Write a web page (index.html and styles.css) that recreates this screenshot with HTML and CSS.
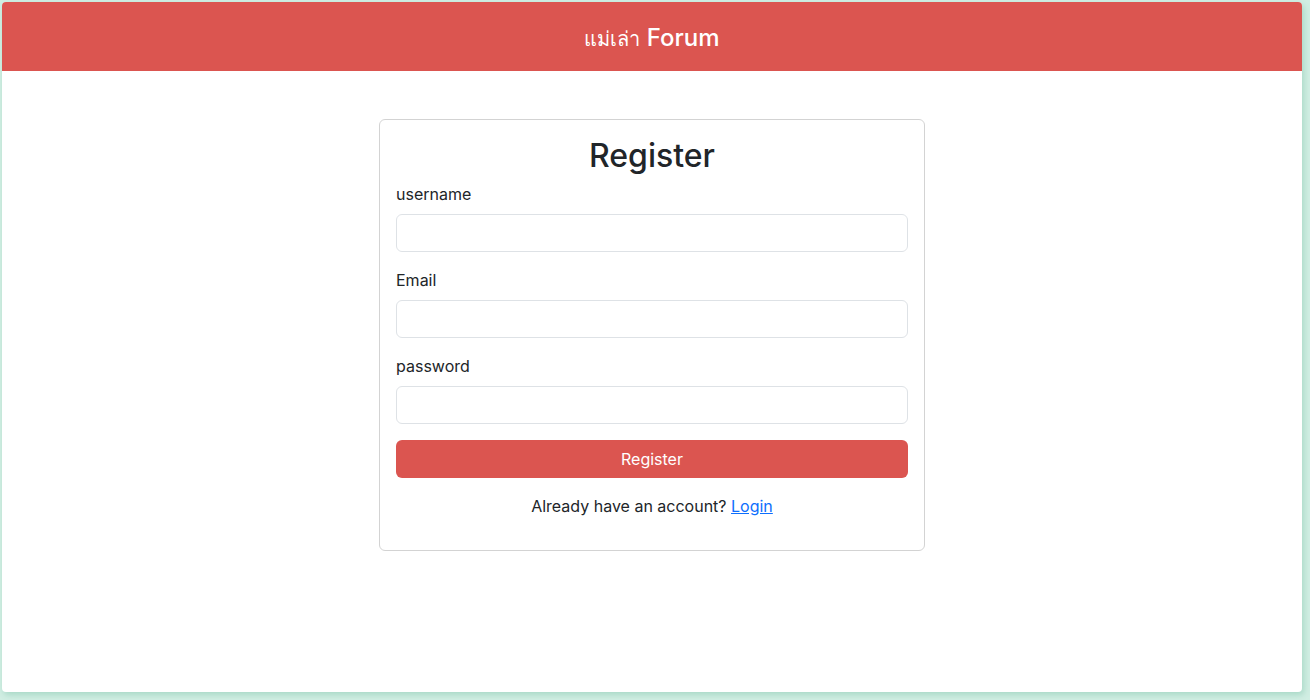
FILE: index.html
```html
<!DOCTYPE html>
<html lang="th">
<head>
<meta charset="utf-8">
<title>Register</title>
<link rel="stylesheet" href="styles.css">
</head>
<body>
<div class="app">
  <header class="topbar">
    <h1 class="brand"><span class="brand-th">แม่เล่า</span> Forum</h1>
  </header>
  <main class="main">
    <form class="card">
      <h2 class="card-title">Register</h2>
      <div class="field">
        <label class="label" for="u">username</label>
        <input class="input" id="u" type="text">
      </div>
      <div class="field">
        <label class="label" for="e">Email</label>
        <input class="input" id="e" type="email">
      </div>
      <div class="field">
        <label class="label" for="p">password</label>
        <input class="input" id="p" type="password">
      </div>
      <button class="btn" type="button">Register</button>
      <p class="foot">Already have an account? <a href="#" class="link">Login</a></p>
    </form>
  </main>
</div>
</body>
</html>
```

FILE: styles.css
```css
* { box-sizing: border-box; }
html, body { height: 100%; }
body {
  margin: 0;
  padding: 2px 8px 8px 2px;
  background: #d1eee3;
  font-family: Inter, "Noto Sans", "DejaVu Sans", sans-serif;
  color: #212529;
  font-size: 16px;
  line-height: 1.5;
}
.app {
  width: 1300px;
  height: 690px;
  background: #fff;
  border-radius: 4px;
  overflow: hidden;
  box-shadow: 2px 3px 6px rgba(120, 190, 165, 0.45);
  display: flex;
  flex-direction: column;
}
.topbar {
  height: 69px;
  padding-top: 3px;
  background: #db5550;
  display: flex;
  align-items: center;
  justify-content: center;
  flex-shrink: 0;
}
.brand {
  margin: 0;
  color: #fff;
  font-size: 24px;
  font-weight: 500;
  line-height: 1.2;
}
.brand-th { font-weight: 400; font-size: 20px; }
.main {
  display: flex;
  justify-content: center;
  padding-top: 48px;
}
.card {
  width: 546px;
  border: 1px solid #d3d3d3;
  border-radius: 6px;
  padding: 16px;
}
.card-title {
  margin: 0 0 8px;
  padding-top: 1px;
  height: 38px;
  text-align: center;
  font-size: 32px;
  font-weight: 500;
  line-height: 1.2;
}
.field { margin-bottom: 16px; }
.label {
  display: block;
  margin-bottom: 8px;
}
.input {
  display: block;
  width: 100%;
  height: 38px;
  border: 1px solid #dee2e6;
  border-radius: 6px;
  padding: 6px 12px;
  font: inherit;
}
.btn {
  display: block;
  width: 100%;
  height: 38px;
  border: 0;
  border-radius: 6px;
  background: #db5550;
  color: #fff;
  font: inherit;
  cursor: pointer;
}
.foot {
  margin: 16px 0 16px;
  text-align: center;
}
.link { color: #0d6efd; text-decoration: underline; }
```
